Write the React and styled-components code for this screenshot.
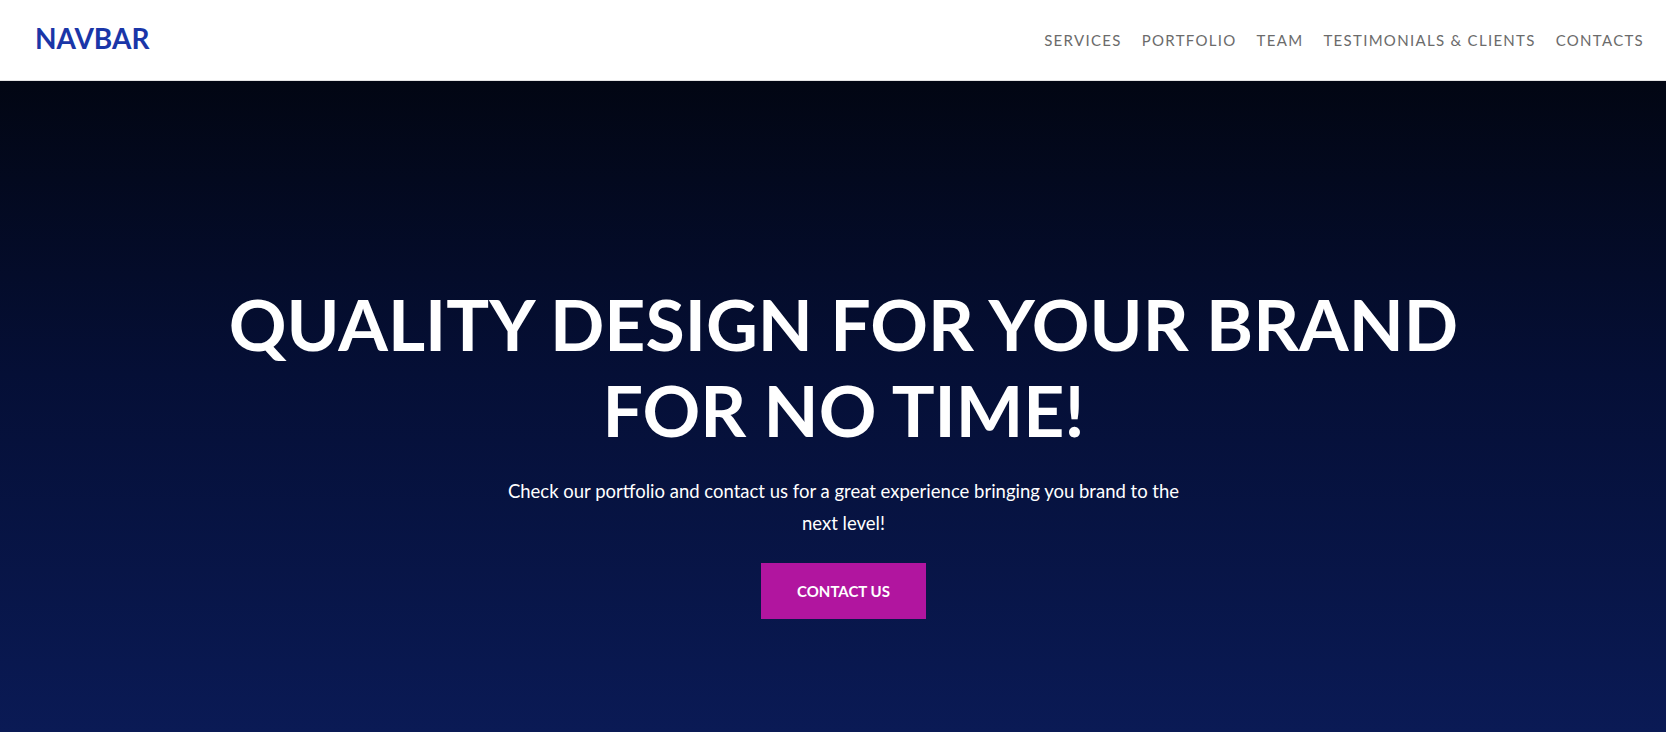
import styled, { createGlobalStyle } from 'styled-components';

const GlobalStyle = createGlobalStyle`
    * {
        box-sizing: border-box;
    }
    body {
        margin: 0;
        font-family: Lato, "Open Sans", sans-serif;
        background: #0a1a55;
    }
`;

const Header = styled.header`
    height: 81px;
    display: flex;
    align-items: center;
    justify-content: space-between;
    padding: 0 22px 1px 35px;
    background: #fff;
    border-bottom: 1px solid #e4e4e4;
`;

const Brand = styled.a`
    color: #1a36a8;
    font-size: 28px;
    font-weight: 700;
    text-decoration: none;
    margin-top: -3px;
`;

const NavList = styled.nav`
    display: flex;
    align-items: center;
    gap: 20px;
    margin-top: 1px;
`;

const NavLink = styled.a`
    color: #6b6b6b;
    font-size: 15px;
    letter-spacing: 1.3px;
    text-transform: uppercase;
    text-decoration: none;
`;

const Hero = styled.section`
    min-height: 651px;
    display: flex;
    flex-direction: column;
    align-items: center;
    padding: 200px 0 0 21px;
    background: linear-gradient(180deg, #020613 0%, #050f36 45%, #0a1a55 100%);
    color: #fff;
    text-align: center;
`;

const Title = styled.h1`
    margin: 0;
    font-size: 71.5px;
    font-weight: 700;
    line-height: 1.2;
`;

const Lead = styled.p`
    margin: 22px 0 0;
    max-width: 690px;
    font-size: 18.5px;
    line-height: 32.5px;
`;

const Button = styled.a`
    margin-top: 23px;
    width: 165px;
    height: 56px;
    display: flex;
    align-items: center;
    justify-content: center;
    background: #b1159f;
    color: #fff;
    font-size: 15px;
    font-weight: 700;
    text-decoration: none;
`;

const links = ['Services', 'Portfolio', 'Team', 'Testimonials & Clients', 'Contacts'];

export default function App() {
    return (
        <>
            <GlobalStyle/>
            <Header>
                <Brand href="#">NAVBAR</Brand>
                <NavList>
                    {links.map(l => <NavLink key={l} href="#">{l}</NavLink>)}
                </NavList>
            </Header>
            <Hero>
                <Title>QUALITY DESIGN FOR YOUR BRAND<br/>FOR NO TIME!</Title>
                <Lead>Check our portfolio and contact us for a great experience bringing you brand to the next level!</Lead>
                <Button href="#">CONTACT US</Button>
            </Hero>
        </>
    );
}
